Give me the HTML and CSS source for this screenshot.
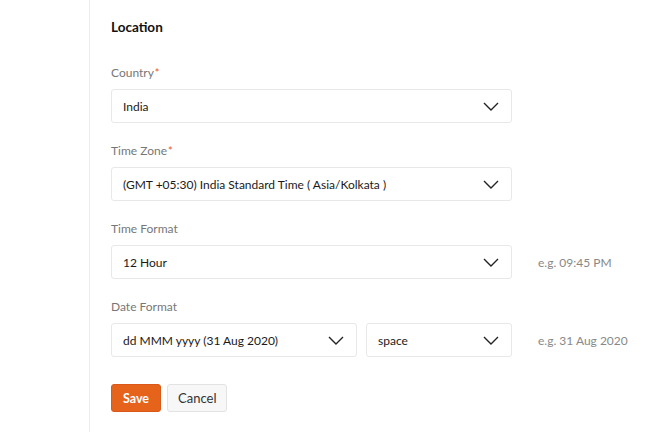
FILE: index.html
```html
<!DOCTYPE html>
<html>

<head>
    <meta charset="UTF-8">
    <link rel="stylesheet" href="styles.css">
</head>

<body>
    <div class="page">
        <div class="side"></div>

        <div class="content">
            <h2 class="section-title">Location</h2>

            <div class="field">
                <div class="field-label">Country<span class="req">*</span></div>
                <div class="field-row">
                    <div class="select wide">
                        <span class="select-value">India</span>
                        <svg class="chevron" width="16" height="9" viewBox="0 0 16 9"><path d="M1 1l7 7 7-7" fill="none" stroke="#222" stroke-width="1.4"/></svg>
                    </div>
                </div>
            </div>

            <div class="field">
                <div class="field-label">Time Zone<span class="req">*</span></div>
                <div class="field-row">
                    <div class="select wide">
                        <span class="select-value">(GMT +05:30) India Standard Time ( Asia/Kolkata )</span>
                        <svg class="chevron" width="16" height="9" viewBox="0 0 16 9"><path d="M1 1l7 7 7-7" fill="none" stroke="#222" stroke-width="1.4"/></svg>
                    </div>
                </div>
            </div>

            <div class="field">
                <div class="field-label">Time Format</div>
                <div class="field-row">
                    <div class="select wide">
                        <span class="select-value">12 Hour</span>
                        <svg class="chevron" width="16" height="9" viewBox="0 0 16 9"><path d="M1 1l7 7 7-7" fill="none" stroke="#222" stroke-width="1.4"/></svg>
                    </div>
                    <span class="hint">e.g. 09:45 PM</span>
                </div>
            </div>

            <div class="field">
                <div class="field-label">Date Format</div>
                <div class="field-row">
                    <div class="select-pair">
                        <div class="select date">
                            <span class="select-value">dd MMM yyyy (31 Aug 2020)</span>
                            <svg class="chevron" width="16" height="9" viewBox="0 0 16 9"><path d="M1 1l7 7 7-7" fill="none" stroke="#222" stroke-width="1.4"/></svg>
                        </div>
                        <div class="select sep">
                            <span class="select-value">space</span>
                            <svg class="chevron" width="16" height="9" viewBox="0 0 16 9"><path d="M1 1l7 7 7-7" fill="none" stroke="#222" stroke-width="1.4"/></svg>
                        </div>
                    </div>
                    <span class="hint">e.g. 31 Aug 2020</span>
                </div>
            </div>

            <div class="actions">
                <button class="btn btn-primary">Save</button>
                <button class="btn btn-default">Cancel</button>
            </div>
        </div>
    </div>
</body>

</html>
```

FILE: styles.css
```css
body {
    margin: 0;
    background-color: #fff;
    font-family: Lato, "Open Sans", sans-serif;
    color: #222;
}

.page {
    display: flex;
    min-height: 432px;
}

.side {
    width: 89px;
    border-right: 1px solid #ececec;
    flex-shrink: 0;
}

.content {
    padding: 18px 0 0 21px;
}

.section-title {
    font-size: 13.5px;
    font-weight: bold;
    margin: 0 0 29px 0;
    line-height: 18px;
    color: #111;
}

.field {
    margin-bottom: 20px;
}

.field-label {
    font-size: 12px;
    color: #777;
    line-height: 16px;
    margin-bottom: 8px;
}

.req {
    color: #e8581a;
    font-size: 11px;
    vertical-align: top;
    margin-left: 1px;
}

.field-row {
    display: flex;
    align-items: center;
}

.select {
    height: 34px;
    box-sizing: border-box;
    border: 1px solid #e8e8e8;
    border-radius: 3px;
    display: flex;
    align-items: center;
    justify-content: space-between;
    padding: 0 12px 0 11px;
    font-size: 12px;
    color: #1a1a1a;
}

.wide {
    width: 401px;
}

.select-pair {
    display: flex;
    gap: 9px;
}

.date {
    width: 246px;
}

.sep {
    width: 146px;
}

.hint {
    margin-left: 26px;
    font-size: 12px;
    color: #888;
}

.actions {
    display: flex;
    gap: 6px;
    padding-top: 7px;
}

.btn {
    font-family: Lato, "Open Sans", sans-serif;
    font-size: 12.5px;
    height: 28px;
    border-radius: 3px;
    padding: 0 11px;
    cursor: pointer;
}

.btn-primary {
    background-color: #e5631b;
    border: 1px solid #d9581a;
    color: #fff;
    font-weight: bold;
}

.btn-default {
    background-color: #f7f7f7;
    border: 1px solid #e3e3e3;
    color: #333;
    font-size: 13px;
    padding: 0 10px;
}
```
